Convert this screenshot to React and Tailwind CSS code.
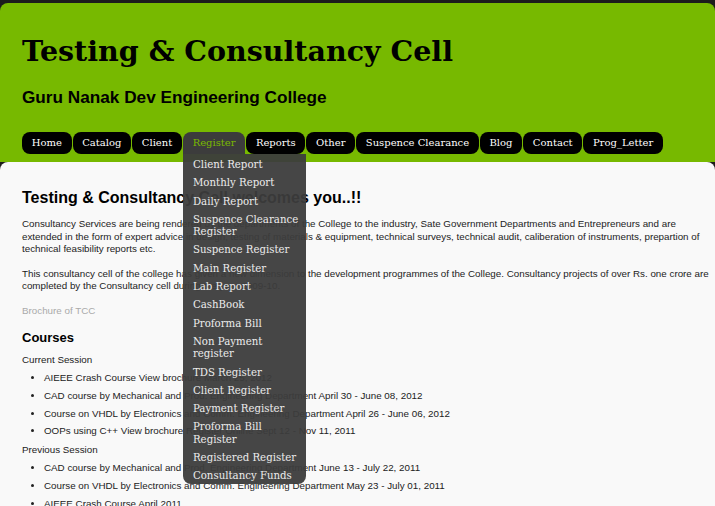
const navItems = [
  "Home",
  "Catalog",
  "Client",
  "Register",
  "Reports",
  "Other",
  "Suspence Clearance",
  "Blog",
  "Contact",
  "Prog_Letter",
];

const registerMenu = [
  "Client Report",
  "Monthly Report",
  "Daily Report",
  "Suspence Clearance Register",
  "Suspence Register",
  "Main Register",
  "Lab Report",
  "CashBook",
  "Proforma Bill",
  "Non Payment register",
  "TDS Register",
  "Client Register",
  "Payment Register",
  "Proforma Bill Register",
  "Registered Register",
  "Consultancy Funds",
];

const current = [
  "AIEEE Crash Course View brochure March 25, 2012",
  "CAD course by Mechanical and Prod. Engineering Department April 30 - June 08, 2012",
  "Course on VHDL by Electronics and Comm. Engineering Department April 26 - June 06, 2012",
  "OOPs using C++ View brochure Register Online Sept 12 - Nov 11, 2011",
];

const previous = [
  "CAD course by Mechanical and Prod. Engineering Department June 13 - July 22, 2011",
  "Course on VHDL by Electronics and Comm. Engineering Department May 23 - July 01, 2011",
  "AIEEE Crash Course April 2011",
];

function Nav() {
  return (
    <nav className="relative flex gap-px pl-[22px] font-['DejaVu_Serif',serif] text-[10px]">
      {navItems.map((item) =>
        item === "Register" ? (
          <div key={item} className="relative">
            <a className="block px-[9.7px] leading-[22px] rounded-t-lg bg-[#3c3c3c] text-[#7ab800]">
              {item}
            </a>
            {/* dropdown */}
            <ul className="absolute left-0 top-[22px] z-10 w-[123px] h-[330px] pt-[2px] rounded-b-lg bg-[#3c3c3c]/95 text-[#ececec] text-[10.2px]">
              {registerMenu.map((m) => (
                <li key={m} className="pl-[10px] pr-[5px] py-[3px] leading-[12.3px]">
                  {m}
                </li>
              ))}
            </ul>
          </div>
        ) : (
          <a key={item} className="block px-[9.7px] leading-[22px] rounded-lg bg-black text-white whitespace-nowrap">
            {item}
          </a>
        )
      )}
    </nav>
  );
}

export default function App() {
  return (
    <div className="min-h-screen bg-[#1c1c1c] pt-[3px] font-['Liberation_Sans',Arial,sans-serif] overflow-hidden">
      {/* Header */}
      <header className="bg-[#77b900] rounded-t-lg pt-[30px] pb-[8px]">
        <h1 className="pl-[22px] font-['DejaVu_Serif',serif] font-bold text-[28.5px] leading-[36px] text-black">
          Testing &amp; Consultancy Cell
        </h1>
        <h2 className="pl-[22px] mt-[17px] font-bold text-[17.2px] leading-[22px] text-black">
          Guru Nanak Dev Engineering College
        </h2>
        <div className="mt-[24px]">
          <Nav />
        </div>
      </header>

      {/* Content */}
      <main className="bg-[#f9f9f9] rounded-t-lg pl-[22px] pr-[10px] pt-[25px] pb-4 text-[#222] text-[9.8px]">
        <h3 className="font-bold text-[16px] leading-[22px] text-black">
          Testing &amp; Consultancy Cell welcomes you..!!
        </h3>
        <p className="mt-[9px] leading-[12.5px] whitespace-nowrap">
          Consultancy Services are being rendered by the departments of the College to the industry, Sate Government Departments and Entrepreneurs and are
          <br />
          extended in the form of expert advice in design, testing of materials &amp; equipment, technical surveys, technical audit, caliberation of instruments, prepartion of
          <br />
          technical feasibility reports etc.
        </p>
        <p className="mt-[12px] leading-[12.5px] whitespace-nowrap">
          This consultancy cell of the college has given a new dimension to the development programmes of the College. Consultancy projects of over Rs. one crore are
          <br />
          completed by the Consultancy cell during the year 2009-10.
        </p>
        <p className="mt-[12px] leading-[12.5px] text-[#aaa]">Brochure of TCC</p>

        <h4 className="mt-[12px] font-bold text-[13px] leading-[18px] text-black">Courses</h4>
        <p className="mt-[4px] leading-[18px]">Current Session</p>
        <ul className="list-disc pl-[22px]">
          {current.map((c) => (
            <li key={c} className="leading-[17.8px] whitespace-nowrap">
              {c}
            </li>
          ))}
        </ul>
        <p className="pt-px leading-[18px]">Previous Session</p>
        <ul className="list-disc pl-[22px]">
          {previous.map((c) => (
            <li key={c} className="leading-[17.8px] whitespace-nowrap">
              {c}
            </li>
          ))}
        </ul>
      </main>
    </div>
  );
}
